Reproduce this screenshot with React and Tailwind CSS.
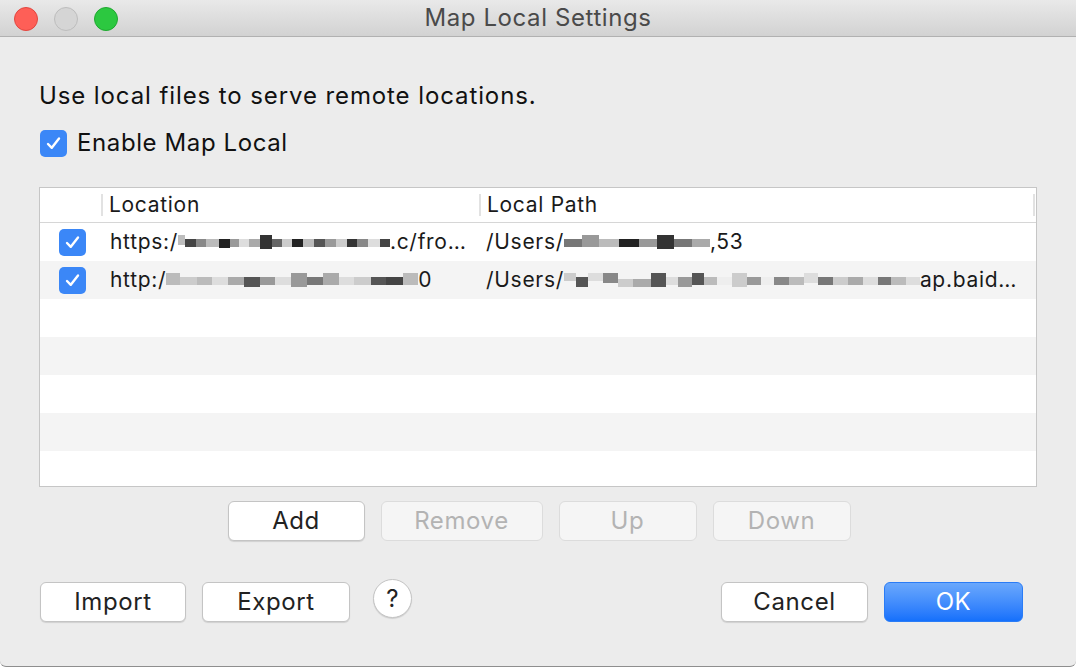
import React from "react"

const FONT = { fontFamily: 'Inter, "Liberation Sans", Arial, sans-serif' }

// pixelated (mosaic) segments: [width, colour, height, offsetY]
const MOSAIC = {
  loc1: [
    [6, "#bdbdbd", 10, 0], [9, "#444", 8, 4], [8, "#888", 8, 4], [10, "#bbb", 8, 4], [9, "#222", 9, 4],
    [8, "#999", 8, 4], [8, "#ddd", 8, 4], [9, "#aaa", 8, 4], [10, "#333", 14, 0], [8, "#666", 8, 4],
    [8, "#ccc", 8, 4], [9, "#222", 8, 4], [9, "#bbb", 8, 4], [9, "#555", 8, 4], [9, "#999", 8, 4],
    [9, "#ccc", 8, 4], [8, "#333", 8, 4], [9, "#888", 8, 4], [10, "#ddd", 8, 4], [8, "#444", 8, 4],
  ],
  loc2: [
    [8, "#bbb", 12, 0], [10, "#ccc", 8, 4], [9, "#bbb", 8, 4], [10, "#ddd", 8, 4], [9, "#aaa", 8, 4],
    [10, "#555", 10, 4], [9, "#999", 8, 4], [9, "#ddd", 8, 4], [10, "#999", 14, 0], [9, "#777", 8, 4],
    [10, "#aaa", 12, 0], [9, "#ddd", 8, 4], [10, "#ccc", 8, 4], [9, "#555", 8, 4], [10, "#444", 8, 4],
    [9, "#bbb", 12, 0],
  ],
  path1: [
    [9, "#777", 8, 4], [9, "#999", 12, 0], [10, "#bbb", 8, 4], [10, "#222", 8, 4], [9, "#999", 8, 4],
    [9, "#333", 14, 0], [9, "#777", 8, 4], [9, "#aaa", 8, 4],
  ],
  path2: [
    [8, "#ccc", 8, 0], [8, "#555", 10, 4], [10, "#ddd", 8, 0], [10, "#888", 10, 0], [10, "#ccc", 8, 6],
    [12, "#aaa", 8, 6], [10, "#555", 14, 0], [8, "#ddd", 8, 4], [9, "#999", 10, 4], [8, "#555", 12, 0],
    [9, "#bbb", 8, 4], [10, "#eee", 8, 4], [10, "#ccc", 14, 0], [9, "#999", 8, 4], [9, "#eee", 8, 4],
    [10, "#888", 8, 4], [10, "#bbb", 8, 4], [9, "#ddd", 10, 0], [10, "#777", 8, 4], [10, "#ccc", 8, 4],
    [10, "#aaa", 8, 4], [10, "#ddd", 8, 4], [9, "#777", 8, 4], [10, "#bbb", 8, 4], [9, "#ddd", 8, 4],
  ],
}

const Mosaic = ({ cells, width }) => {
  const total = cells.reduce((s, c) => s + c[0], 0)
  const k = width / total
  return (
    <span className="inline-flex items-start h-[16px] mt-[2px]">
      {cells.map(([w, c, h, y], i) => (
        <span key={i} className="block shrink-0" style={{ width: w * k, height: h, marginTop: y, background: c }} />
      ))}
    </span>
  )
}

const CheckBox = () => (
  <span className="w-[27px] h-[27px] rounded-[5px] bg-[#3b87f7] flex items-center justify-center shrink-0">
    <svg width="19" height="19" viewBox="0 0 19 19" fill="none">
      <path d="M4 10 L7.8 13.8 L15 4.5" stroke="white" strokeWidth="2.4" strokeLinecap="round" strokeLinejoin="round" />
    </svg>
  </span>
)

const Btn = ({ children, w, disabled, primary }) => {
  let cls = "bg-white border-[#c4c4c4] text-[#222] shadow-[0_1px_1px_rgba(0,0,0,0.12)]"
  if (disabled) cls = "bg-[#f5f5f5] border-[#dcdcdc] text-[#b3b3b3]"
  if (primary) cls = "bg-gradient-to-b from-[#6aa8fc] to-[#1470fb] border-[#2a7cf6] text-white"
  return (
    <div
      className={"h-[40px] rounded-[6px] border flex items-center justify-center text-[24px] tracking-[0.6px] " + cls}
      style={{ width: w }}
    >
      {children}
    </div>
  )
}

const rows = [
  { loc: ["https:/", MOSAIC.loc1, 212, ".c/fro…"], path: ["/Users/", MOSAIC.path1, 146, ",53"] },
  { loc: ["http:/", MOSAIC.loc2, 252, "0"], path: ["/Users/", MOSAIC.path2, 356, "ap.baid…"] },
]

export default function App() {
  return (
    <div className="w-[1076px] h-[668px] bg-white overflow-hidden" style={FONT}>
      <div className="w-full h-[667px] bg-[#ececec] border-b border-[#8e8e8e] rounded-b-[6px] flex flex-col">
        {/* Title bar */}
        <div className="h-[37px] shrink-0 bg-gradient-to-b from-[#e9e9e9] to-[#d2d2d2] border-b border-[#b1b1b1] flex items-center relative">
          <div className="flex gap-[16px] pl-[14px] pt-[1px]">
            <span className="w-[24px] h-[24px] rounded-full bg-[#fe5f57] border border-[#e2463f]" />
            <span className="w-[24px] h-[24px] rounded-full bg-[#d5d5d5] border border-[#bdbdbd]" />
            <span className="w-[24px] h-[24px] rounded-full bg-[#2cc840] border border-[#1fa830]" />
          </div>
          <div className="absolute inset-0 flex items-center justify-center text-[24px] text-[#4a4a4a] tracking-[0.6px]">
            Map Local Settings
          </div>
        </div>

        {/* Body */}
        <div className="flex flex-col px-[39px]">
          <div className="mt-[46px] text-[24px] leading-[26px] text-[#111] tracking-[0.9px]">
            Use local files to serve remote locations.
          </div>
          <div className="mt-[20px] flex items-center gap-[10px] h-[28px]">
            <span className="ml-[1px]">
              <CheckBox />
            </span>
            <span className="text-[24px] text-[#111] tracking-[0.6px]">Enable Map Local</span>
          </div>

          {/* Table */}
          <div className="mt-[30px] h-[300px] border border-[#c6c6c6] bg-white overflow-hidden flex flex-col">
            <div className="h-[35px] shrink-0 flex items-center border-b border-[#d6d6d6] text-[21px] text-[#1a1a1a] tracking-[0.7px]">
              <div className="w-[63px] h-full flex items-center justify-end">
                <span className="w-[2px] h-[22px] bg-[#e2e2e2]" />
              </div>
              <div className="w-[376px] h-full flex items-center pl-[6px]">Location</div>
              <div className="h-full flex items-center">
                <span className="w-[2px] h-[22px] bg-[#e2e2e2]" />
              </div>
              <div className="flex-1 h-full flex items-center pl-[6px]">Local Path</div>
              <div className="h-full flex items-center pr-[1px]">
                <span className="w-[2px] h-[22px] bg-[#e2e2e2]" />
              </div>
            </div>
            {Array.from({ length: 7 }).map((_, i) => {
              const r = rows[i]
              return (
                <div
                  key={i}
                  className={"h-[38px] shrink-0 flex items-center text-[21px] text-[#1a1a1a] tracking-[0.7px] " + (i % 2 ? "bg-[#f4f4f4]" : "bg-white")}
                >
                  {r && (
                    <>
                      <div className="w-[63px] flex justify-center pl-[2px]">
                        <CheckBox />
                      </div>
                      <div className="w-[378px] pl-[7px] flex items-center whitespace-nowrap">
                        <span>{r.loc[0]}</span>
                        <Mosaic cells={r.loc[1]} width={r.loc[2]} />
                        <span>{r.loc[3]}</span>
                      </div>
                      <div className="flex-1 pl-[5px] flex items-center whitespace-nowrap">
                        <span>{r.path[0]}</span>
                        <Mosaic cells={r.path[1]} width={r.path[2]} />
                        <span>{r.path[3]}</span>
                      </div>
                    </>
                  )}
                </div>
              )
            })}
          </div>

          {/* Add / Remove / Up / Down */}
          <div className="mt-[14px] flex justify-center gap-[16px] pl-[2px]">
            <Btn w={137}>Add</Btn>
            <Btn w={162} disabled>Remove</Btn>
            <Btn w={138} disabled>Up</Btn>
            <Btn w={138} disabled>Down</Btn>
          </div>

          {/* Bottom row */}
          <div className="mt-[38px] flex items-start pl-[1px] pr-[14px]">
            <div className="mt-[3px]">
              <Btn w={146}>Import</Btn>
            </div>
            <div className="mt-[3px] ml-[16px]">
              <Btn w={148}>Export</Btn>
            </div>
            <div className="ml-[23px] w-[39px] h-[39px] rounded-full bg-white border border-[#c4c4c4] shadow-[0_1px_1px_rgba(0,0,0,0.12)] flex items-center justify-center text-[24px] text-[#222]">
              ?
            </div>
            <div className="flex-1" />
            <div className="mt-[3px]">
              <Btn w={147}>Cancel</Btn>
            </div>
            <div className="mt-[3px] ml-[16px]">
              <Btn w={139} primary>OK</Btn>
            </div>
          </div>
        </div>
      </div>
    </div>
  )
}
